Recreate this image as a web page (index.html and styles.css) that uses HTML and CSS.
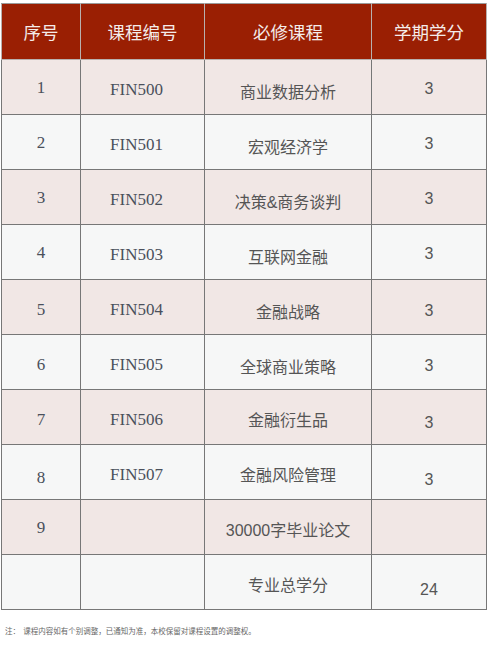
FILE: index.html
```html
<!DOCTYPE html>
<html lang="zh">
<head>
<meta charset="utf-8">
<link rel="stylesheet" href="styles.css">
</head>
<body>
<div class="page">
  <table class="courses">
    <colgroup>
      <col class="c1"><col class="c2"><col class="c3"><col class="c4">
    </colgroup>
    <thead>
      <tr><th>序号</th><th>课程编号</th><th>必修课程</th><th>学期学分</th></tr>
    </thead>
    <tbody>
      <tr class="odd"><td class="num">1</td><td class="code">FIN500</td><td class="name">商业数据分析</td><td class="credit">3</td></tr>
      <tr><td class="num">2</td><td class="code">FIN501</td><td class="name">宏观经济学</td><td class="credit">3</td></tr>
      <tr class="odd"><td class="num">3</td><td class="code">FIN502</td><td class="name">决策&amp;商务谈判</td><td class="credit">3</td></tr>
      <tr><td class="num">4</td><td class="code">FIN503</td><td class="name">互联网金融</td><td class="credit">3</td></tr>
      <tr class="odd"><td class="num mid">5</td><td class="code">FIN504</td><td class="name">金融战略</td><td class="credit mid">3</td></tr>
      <tr><td class="num mid">6</td><td class="code">FIN505</td><td class="name">全球商业策略</td><td class="credit mid">3</td></tr>
      <tr class="odd"><td class="num mid">7</td><td class="code">FIN506</td><td class="name up">金融衍生品</td><td class="credit low">3</td></tr>
      <tr><td class="num low">8</td><td class="code">FIN507</td><td class="name up">金融风险管理</td><td class="credit lower">3</td></tr>
      <tr class="odd"><td class="num">9</td><td class="code"></td><td class="name up">30000字毕业论文</td><td class="credit"></td></tr>
      <tr><td class="num"></td><td class="code"></td><td class="name up">专业总学分</td><td class="credit lower">24</td></tr>
    </tbody>
  </table>
  <p class="note">注：&nbsp;&nbsp;课程内容如有个别调整，已通知为准，本校保留对课程设置的调整权。</p>
</div>
</body>
</html>
```
FILE: styles.css
```css
html, body {
  margin: 0;
  padding: 0;
  background: #ffffff;
}
.page {
  padding: 3px 0 0 1px;
  width: 491px;
  height: 645px;
  box-sizing: border-box;
  overflow: hidden;
}
.courses {
  border-collapse: collapse;
  table-layout: fixed;
  width: 485px;
  font-family: "Liberation Sans", "Noto Sans CJK SC", sans-serif;
  color: #555555;
}
.c1 { width: 79px; }
.c2 { width: 124px; }
.c3 { width: 167px; }
.c4 { width: 115px; }
.courses th,
.courses td {
  border: 1px solid #777777;
  text-align: center;
  vertical-align: middle;
  padding: 0;
}
.courses th {
  height: 55px;
  background: #9a1f03;
  color: #f4ecea;
  font-size: 17.5px;
  font-weight: normal;
  font-family: "Noto Sans CJK SC", sans-serif;
  border-color: #b8b0ae;
  border-top-color: #9a9a9a;
}
.courses td {
  height: 54px;
  font-size: 16px;
  background: #f6f7f7;
}
.courses tr.odd td {
  background: #f1e7e5;
}
.courses td.num {
  font-family: "Liberation Serif", serif;
  font-size: 17px;
  color: #4a505b;
  padding-top: 1px;
  height: 53px;
}
.courses td.num.mid { padding-top: 5px; height: 49px; }
.courses td.num.low { padding-top: 11px; height: 43px; }
.courses td.code {
  font-family: "Liberation Serif", serif;
  font-size: 17px;
  color: #4a505b;
  padding: 6px 12px 0 0;
  height: 48px;
}
.courses td.name {
  font-family: "Liberation Sans", "Noto Sans CJK SC", sans-serif;
  font-size: 16px;
  padding-top: 8px;
  height: 46px;
}
.courses td.name.up { padding-top: 4px; height: 50px; }
.courses td.credit {
  font-size: 16px;
  padding-top: 3px;
  height: 51px;
}
.courses td.credit.mid { padding-top: 7px; height: 47px; }
.courses td.credit.low { padding-top: 11px; height: 43px; }
.courses td.credit.lower { padding-top: 15px; height: 39px; }
.note {
  margin: 15px 0 0 4px;
  font-family: "Noto Sans CJK SC", sans-serif;
  font-size: 7.5px;
  color: #666666;
}
```
